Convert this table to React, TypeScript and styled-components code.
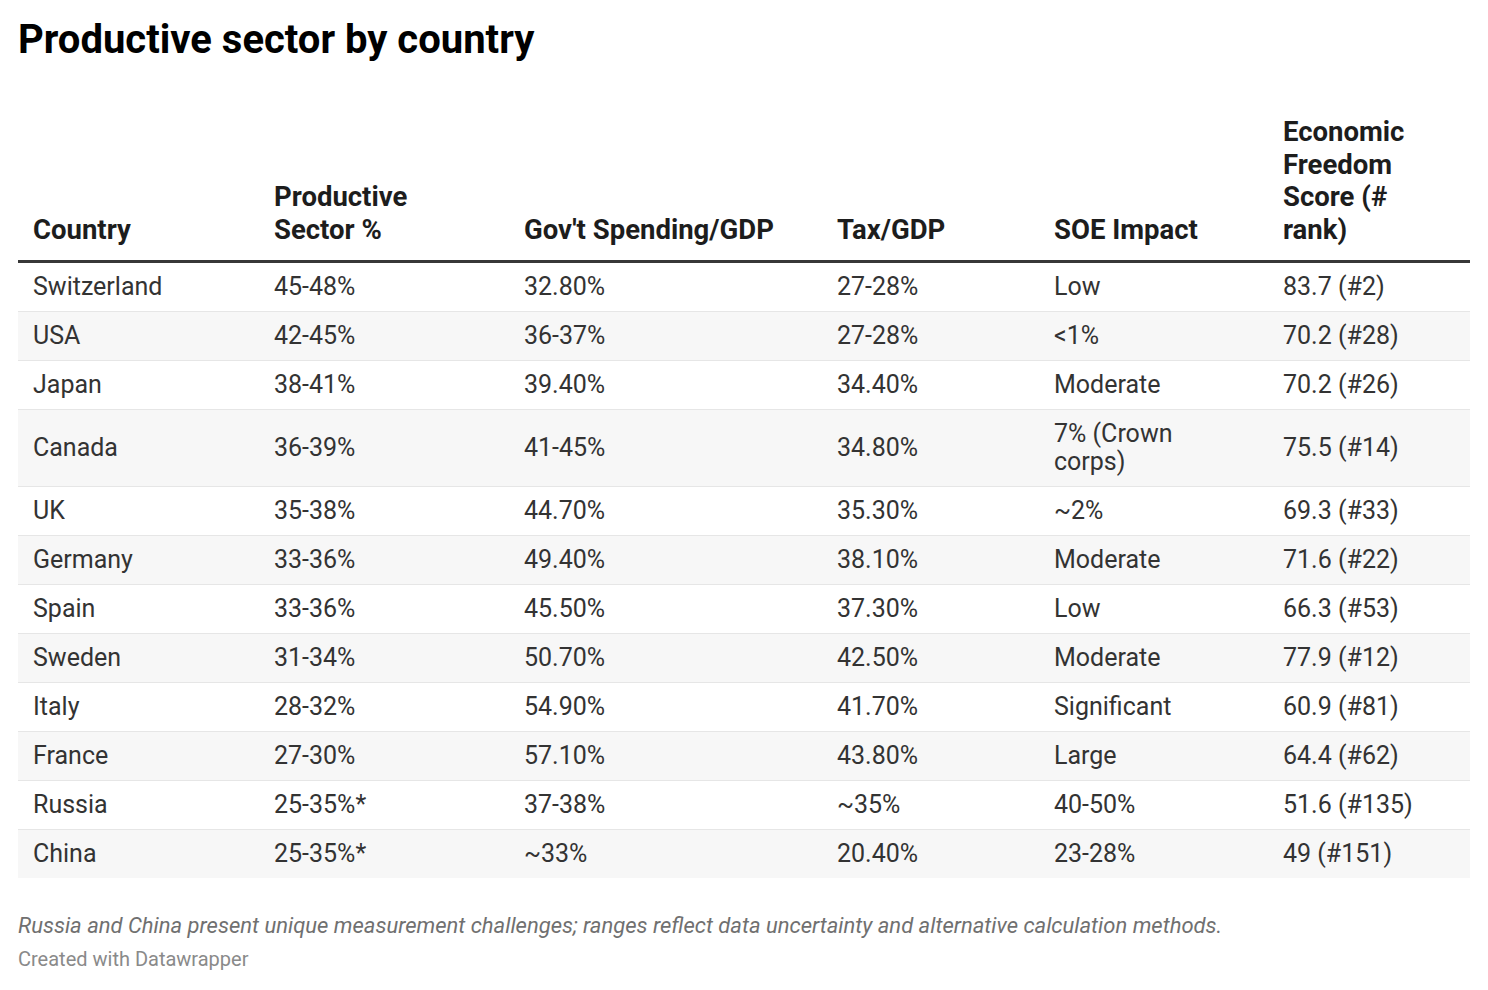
import styled, { createGlobalStyle } from "styled-components";

const GlobalStyle = createGlobalStyle`
  body {
    margin: 0;
    background: #ffffff;
    font-family: Roboto, "Liberation Sans", sans-serif;
  }
`;

const Container = styled.div`
  padding: 14px 18px 0 18px;
  width: 1452px;
`;

const Title = styled.h1`
  margin: 0;
  font-size: 40px;
  font-weight: 700;
  color: #000000;
  line-height: 52px;
`;

const Table = styled.table`
  margin-top: 50px;
  width: 1452px;
  border-collapse: collapse;
  table-layout: fixed;
  font-size: 25px;
  color: #333333;
`;

const HeadCell = styled.th<{ $w: number }>`
  box-sizing: border-box;
  width: ${(p) => p.$w}px;
  text-align: left;
  vertical-align: bottom;
  font-size: 27.5px;
  font-weight: 700;
  line-height: 32.5px;
  padding: 0 30px 14px 15px;
  border-bottom: 3px solid #383838;
  color: #1d1d1d;
`;

const Row = styled.tr<{ $shaded: boolean }>`
  background: ${(p) => (p.$shaded ? "#f7f7f7" : "#ffffff")};
  border-bottom: 1px solid #e6e6e6;
  &:last-child {
    border-bottom: none;
  }
`;

const Cell = styled.td`
  padding: 10px 30px 10px 15px;
  line-height: 28px;
  vertical-align: middle;
`;

const Notes = styled.p`
  margin: 35px 0 0 0;
  font-size: 22px;
  font-style: italic;
  color: #707070;
  line-height: 26px;
`;

const Credit = styled.p`
  margin: 7px 0 0 0;
  font-size: 20px;
  color: #8a8a8a;
  line-height: 26px;
`;

const columns = [
  { label: "Country", w: 241 },
  { label: "Productive Sector %", w: 250 },
  { label: "Gov't Spending/GDP", w: 313 },
  { label: "Tax/GDP", w: 217 },
  { label: "SOE Impact", w: 229 },
  { label: "Economic Freedom Score (# rank)", w: 202 },
];

const rows = [
  ["Switzerland", "45-48%", "32.80%", "27-28%", "Low", "83.7 (#2)"],
  ["USA", "42-45%", "36-37%", "27-28%", "<1%", "70.2 (#28)"],
  ["Japan", "38-41%", "39.40%", "34.40%", "Moderate", "70.2 (#26)"],
  ["Canada", "36-39%", "41-45%", "34.80%", "7% (Crown corps)", "75.5 (#14)"],
  ["UK", "35-38%", "44.70%", "35.30%", "~2%", "69.3 (#33)"],
  ["Germany", "33-36%", "49.40%", "38.10%", "Moderate", "71.6 (#22)"],
  ["Spain", "33-36%", "45.50%", "37.30%", "Low", "66.3 (#53)"],
  ["Sweden", "31-34%", "50.70%", "42.50%", "Moderate", "77.9 (#12)"],
  ["Italy", "28-32%", "54.90%", "41.70%", "Significant", "60.9 (#81)"],
  ["France", "27-30%", "57.10%", "43.80%", "Large", "64.4 (#62)"],
  ["Russia", "25-35%*", "37-38%", "~35%", "40-50%", "51.6 (#135)"],
  ["China", "25-35%*", "~33%", "20.40%", "23-28%", "49 (#151)"],
];

export default function App() {
  return (
    <Container>
      <GlobalStyle />
      <Title>Productive sector by country</Title>
      <Table>
        <thead>
          <tr>
            {columns.map((c) => (
              <HeadCell key={c.label} $w={c.w}>
                {c.label}
              </HeadCell>
            ))}
          </tr>
        </thead>
        <tbody>
          {rows.map((r, i) => (
            <Row key={r[0]} $shaded={i % 2 === 1}>
              {r.map((v, j) => (
                <Cell key={j}>{v}</Cell>
              ))}
            </Row>
          ))}
        </tbody>
      </Table>
      <Notes>
        Russia and China present unique measurement challenges; ranges reflect
        data uncertainty and alternative calculation methods.
      </Notes>
      <Credit>Created with Datawrapper</Credit>
    </Container>
  );
}
